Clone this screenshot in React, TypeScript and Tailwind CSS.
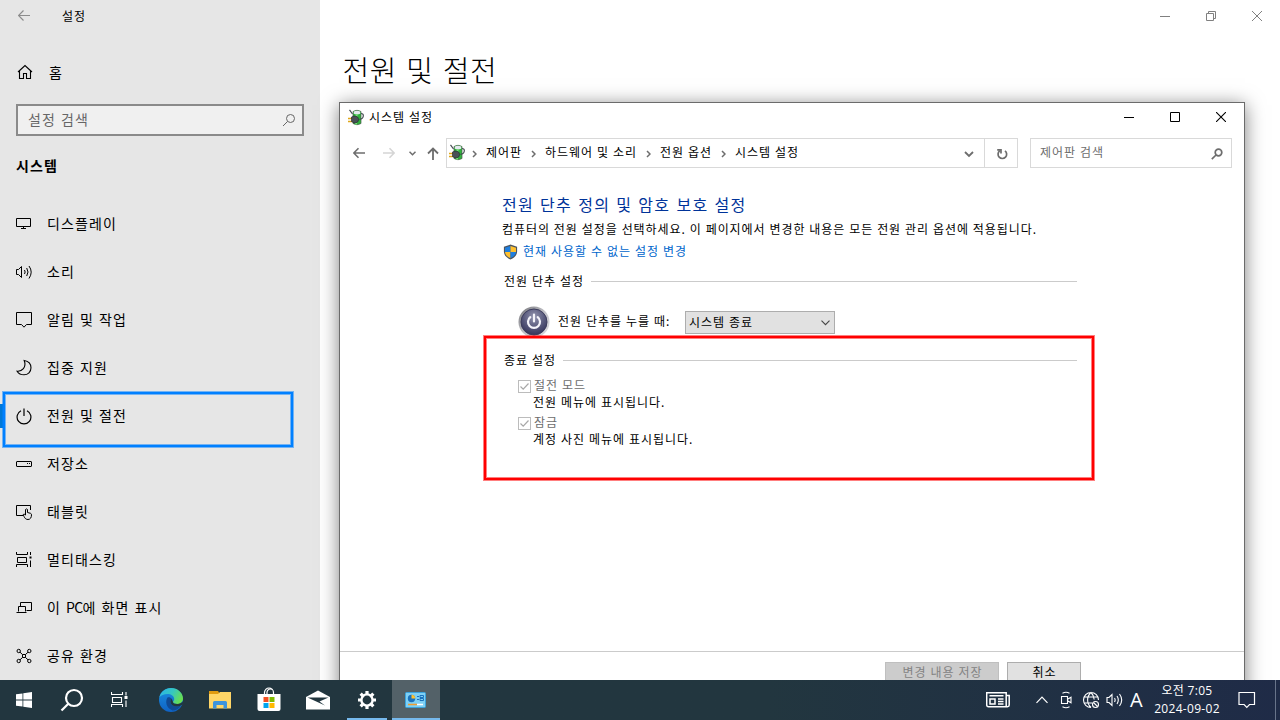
import { ReactNode } from "react"

interface IconProps {
  w?: number
  h?: number
  sw?: number
  className?: string
  children: ReactNode
}

const Icon = ({ w = 18, h = 18, sw = 1, className = "", children }: IconProps) => (
  <svg
    width={w}
    height={h}
    viewBox={`0 0 ${w} ${h}`}
    fill="none"
    stroke="currentColor"
    strokeWidth={sw}
    className={`shrink-0 ${className}`}
  >
    {children}
  </svg>
)

const menuItems: { label: ReactNode; icon: ReactNode }[] = [
  {
    label: "디스플레이",
    icon: <path d="M.5 3.5h14v8H.5zM7.5 11.5v2M5 13.5h5" />,
  },
  {
    label: "소리",
    icon: (
      <>
        <path d="M.5 6.5h2l3-3v11l-3-3h-2z" />
        <path d="M8.5 7q1.3 2 0 4M10.7 5q2.6 4 0 8M13 3q4.4 6 0 12.5" />
      </>
    ),
  },
  {
    label: "알림 및 작업",
    icon: <path d="M.5 1.5h15v12h-5l-2.500 2.700-2.500-2.700h-5z" />,
  },
  {
    label: "집중 지원",
    icon: (
      <path
        d="M8.200 1.500C12.500 2.200 15 5 15 8.800c0 4-3 7-7 7-3 0-5.500-1.300-6.900-3.600 2.500.3 4.700-.7 6.300-2.600 1.800-2.300 2-5 .8-8.100z"
        strokeWidth="1.1"
      />
    ),
  },
  {
    label: "전원 및 절전",
    icon: <path d="M5 3.800A6.900 6.900 0 1 0 11 3.800M8 1.500v7.500" strokeWidth="1.200" />,
  },
  {
    label: "저장소",
    icon: (
      <>
        <rect x=".5" y="6.500" width="15" height="5" rx=".5" />
        <path d="M11 8.500h1M13 8.500h1" />
      </>
    ),
  },
  {
    label: "태블릿",
    icon: (
      <>
        <path d="M7 12.500H.5v-10h14V7" />
        <path d="M9.500 12V6.500q1-1.200 2 0V9.500l3 .8q1 .4 1 1.500c0 2.500-1 4.700-3.500 4.700-2 0-3-1-4-3l-.8-2q.8-1 2.300.5" />
      </>
    ),
  },
  {
    label: "멀티태스킹",
    icon: (
      <>
        <path d="M.5 1v2.500h11V1M1.500 6.500h9v5h-9zM.5 16v-2.500h11V16M14.500 1v3M14.500 9.500V16" />
        <path d="M13.500 6.500h2" strokeWidth="2" />
      </>
    ),
  },
  {
    label: (
      <>
        이 <span className="tracking-[-0.6px]">PC</span>에 화면 표시
      </>
    ),
    icon: <path d="M4.500 7V3.500h11v8h-5M2.500 12.500v-5h7v5M.5 13.500h10" />,
  },
  {
    label: "공유 환경",
    icon: (
      <>
        <circle cx="2.700" cy="4" r="1.700" />
        <circle cx="13.300" cy="4" r="1.700" />
        <circle cx="2.700" cy="14" r="1.700" />
        <circle cx="13.300" cy="14" r="1.700" />
        <path d="M6.500 7.500h3v3h-3zM4 5.200l2.500 2.300M12 5.200L9.500 7.500M4 12.800l2.500-2.300M12 12.800l-2.500-2.300" />
      </>
    ),
  },
]

const Sidebar = () => (
  <aside className="flex w-[320px] shrink-0 flex-col bg-[#e6e6e6]">
    <div className="flex h-8 items-center pl-[18px]">
      <Icon w={12} h={12} sw={1.2} className="text-[#8c8c8c]">
        <path d="M0.500 5.500h12M5.500 .5L0.500 5.500l5 5" />
      </Icon>
      <span className="ml-8 text-xs tracking-[0.96px]">설정</span>
    </div>
    <div className="mt-4 flex h-12 items-center pl-[17px]">
      <Icon w={16} h={16} sw={1.1}>
        <path d="M1 8l7-6.500L15 8M2.500 7v7.500h4v-5h3v5h4V7" />
      </Icon>
      <span className="ml-4 text-sm tracking-[1.1px]">홈</span>
    </div>
    <div className="mx-4 mt-2 flex h-8 items-center justify-between border-2 border-[#8a8a8a] bg-[#f0f0f0] pr-1.5 pl-[10px] text-[#666]">
      <span className="pb-[3px] text-sm tracking-[1.12px] [word-spacing:0.7px]">설정 검색</span>
      <Icon w={14} h={14}>
        <circle cx="8.500" cy="5.500" r="4" />
        <path d="M5.500 8.500L1 13" />
      </Icon>
    </div>
    <h2 className="mt-[17px] h-[47px] pl-4 text-sm leading-6 font-bold tracking-[1.1px]">
      시스템
    </h2>
    <nav>
      {menuItems.map((item, i) => (
        <div key={i} className="flex h-12 items-center pl-4">
          <Icon>{item.icon}</Icon>
          <span className="ml-[13px] pb-0.5 text-sm tracking-[1.12px] [word-spacing:0.7px]">
            {item.label}
          </span>
        </div>
      ))}
    </nav>
  </aside>
)

const SettingsMain = () => (
  <main className="flex-1">
    <div className="flex h-8 justify-end text-[#808080]">
      <div className="flex w-[46px] items-center justify-center">
        <Icon w={10} h={10}>
          <path d="M0 5.500h10" />
        </Icon>
      </div>
      <div className="flex w-[46px] items-center justify-center">
        <Icon w={10} h={10}>
          <path d="M.5 2.500h7v7h-7zM2.500 2.500v-2h7v7h-2" />
        </Icon>
      </div>
      <div className="flex w-[46px] items-center justify-center">
        <Icon w={10} h={10}>
          <path d="M0 0l10 10M10 0L0 10" />
        </Icon>
      </div>
    </div>
    <h1 className="mt-4 pl-[22.500px] text-[29px] leading-[42px] font-light tracking-[0.6px] [word-spacing:2.2px]">
      전원 및 절전
    </h1>
  </main>
)

const PlugIcon = () => (
  <svg width="16" height="17" viewBox="0 0 16 17" className="shrink-0">
    <path d="M5 2.500q4-2.500 8 0v12q-4 2.500-8 0z" fill="#2fb33c" stroke="#4a5a4a" strokeWidth=".7" />
    <path d="M5.800 2.600q3.200-1.700 6.400 0v2.200q-3.200 1.200-6.400 0z" fill="#e4e9ee" />
    <path d="M8.500 5.500v2M8 13.500v2" stroke="#7be07a" strokeWidth="2" />
    <path d="M13 4.500q2.500 0 2.300 2.500-.3 3-4 3.500M4.500 5L1.500 .8" fill="none" stroke="#444b50" strokeWidth="1.200" />
    <path d="M0 9.500h4M0 12.500h4" stroke="#e0a81a" strokeWidth="1.500" />
    <path d="M3.500 8l2.500-1q4.500 0 4.500 3.500T6 14l-2.500-1.500z" fill="#4a5056" stroke="#1f2326" strokeWidth=".6" />
  </svg>
)

const Chevron = () => (
  <div className="flex w-[23px] shrink-0 items-center justify-center text-[#6d6d6d]">
    <Icon w={5} h={8} sw={1.5} className="mt-0.5">
      <path d="M1 1l3 3-3 3" />
    </Icon>
  </div>
)

const crumbs = ["제어판", "하드웨어 및 소리", "전원 옵션", "시스템 설정"]

const AddressBar = () => (
  <div className="mt-[5px] flex h-[30px] items-center">
    <div className="flex w-[106px] shrink-0 items-center pl-[13px] text-[#6d6d6d]">
      <Icon w={12} h={12} sw={1.6}>
        <path d="M.8 6H12M5.500 1.200L.8 6l4.700 4.800" />
      </Icon>
      <Icon w={12} h={12} sw={1.6} className="ml-[18px] text-[#d5d5d5]">
        <path d="M0 6h11.200M6.500 1.200L11.200 6l-4.700 4.800" />
      </Icon>
      <Icon w={7} h={5} sw={1.5} className="ml-[14px]">
        <path d="M.5 .8l3 3 3-3" />
      </Icon>
      <Icon w={12} h={13} sw={1.8} className="ml-[11px]">
        <path d="M6 1.500V13M1 6.500l5-5 5 5" />
      </Icon>
    </div>
    <div className="flex h-[30px] w-[572px] border border-[#d9d9d9]">
      <div className="flex flex-1 items-center pl-[2px] text-xs tracking-[0.96px] [word-spacing:0.35px]">
        <div className="-mr-0.5 pb-px">
          <PlugIcon />
        </div>
        {crumbs.map((crumb) => (
          <div key={crumb} className="flex items-center">
            <Chevron />
            <span className="pb-0.5">{crumb}</span>
          </div>
        ))}
        <Icon w={10} h={7} sw={1.8} className="mt-0.5 mr-[10px] ml-auto text-[#6d6d6d]">
          <path d="M1 1l4 4 4-4" />
        </Icon>
      </div>
      <div className="flex w-[33px] items-center justify-center border-l border-[#d9d9d9] text-[#6d6d6d]">
        <Icon w={12} h={12} sw={1.7} className="mt-px ml-px">
          <path d="M9 2.800A4.300 4.300 0 1 1 3.700 2.800M1.200 1.800h3.800v3.800" />
        </Icon>
      </div>
    </div>
    <div className="ml-3 flex h-[30px] w-[202px] items-center justify-between border border-[#d9d9d9] pr-[8px] pl-[9px]">
      <span className="pb-0.5 text-xs tracking-[0.96px] text-[#6d6d6d] [word-spacing:0.35px]">
        제어판 검색
      </span>
      <Icon w={12} h={12} sw={1.7} className="mt-px">
        <g stroke="#6d6d6d">
          <circle cx="7.500" cy="4.500" r="3.300" />
          <path d="M5 7L.8 11.200" />
        </g>
      </Icon>
    </div>
  </div>
)

const ShieldIcon = () => (
  <svg width="15" height="16" viewBox="0 0 15 16" className="shrink-0">
    <path d="M7.500 .6l6.600 2.200v4.500c0 4-2.800 6.600-6.600 8.200C3.700 13.900.9 11.300.9 7.300V2.800z" fill="#4c5560" />
    <path d="M7.500 1.900v6H2V3.700z" fill="#1f7fe0" />
    <path d="M7.500 1.900L13 3.700v4.200H7.500z" fill="#ffc02e" />
    <path d="M2 7.900h5.500v6.300C4.500 12.800 2.300 10.900 2 7.900z" fill="#ffc02e" />
    <path d="M13 7.900H7.500v6.300c3-1.400 5.200-3.300 5.500-6.300z" fill="#1f7fe0" />
  </svg>
)

const PowerOrb = () => (
  <svg width="32" height="32" viewBox="0 0 32 32" className="shrink-0">
    <defs>
      <linearGradient id="rim" x1="0" y1="0" x2="1" y2="1">
        <stop offset="0" stopColor="#6f7074" />
        <stop offset=".5" stopColor="#c2c2c8" />
        <stop offset="1" stopColor="#dcdce0" />
      </linearGradient>
      <radialGradient id="orb" cx=".5" cy=".3" r=".7">
        <stop offset="0" stopColor="#9496b0" />
        <stop offset=".6" stopColor="#56577a" />
        <stop offset="1" stopColor="#34345a" />
      </radialGradient>
    </defs>
    <circle cx="16" cy="16" r="15.500" fill="url(#rim)" />
    <circle cx="16" cy="16" r="13" fill="url(#orb)" stroke="#3c3c5c" />
    <path d="M12.300 11.200a6 6 0 1 0 7.400 0M16 8.500v7" fill="none" stroke="#f4f4fa" strokeWidth="2.200" strokeLinecap="round" />
  </svg>
)

const Section = ({ title }: { title: string }) => (
  <div className="flex h-5 w-[573px] items-center">
    <span>{title}</span>
    <div className="ml-[7px] h-px flex-1 bg-[#cbcbcb]" />
  </div>
)

const Option = ({ label, note }: { label: string; note: string }) => (
  <div className="h-[37px] pl-[14px]">
    <div className="flex h-[17px] items-center">
      <div className="mt-1 flex size-[13px] items-center justify-center border border-[#bcbcbc]">
        <Icon w={11} h={11} sw={1.2} className="text-[#a8a8a8]">
          <path d="M1.500 5.500l2.700 2.700 5.300-5.700" />
        </Icon>
      </div>
      <span className="ml-[3px] text-[#6d6d6d]">{label}</span>
    </div>
    <p className="pl-[15px] leading-[17px]">{note}</p>
  </div>
)

const ControlPanel = () => (
  <section className="absolute top-[102px] left-[339px] flex h-[640px] w-[906px] flex-col border border-[#6b6b6b] bg-white shadow-[0_3px_18px_rgba(0,0,0,0.5)]">
    <div className="flex h-[30px] shrink-0 items-center pb-0.5 pl-2">
      <PlugIcon />
      <span className="ml-[5px] text-xs tracking-[0.96px] [word-spacing:0.35px]">시스템 설정</span>
      <div className="ml-auto flex">
        <div className="flex w-[46px] items-center justify-center pl-px">
          <Icon w={11} h={10}>
            <path d="M0 5.500h10" />
          </Icon>
        </div>
        <div className="flex w-[46px] items-center justify-center">
          <Icon w={10} h={10}>
            <path d="M.5 .5h9v9h-9z" />
          </Icon>
        </div>
        <div className="flex w-[46px] items-center justify-center">
          <Icon w={10} h={10} sw={1.1}>
            <path d="M0 0l10 10M10 0L0 10" />
          </Icon>
        </div>
      </div>
    </div>
    <AddressBar />
    <div className="mt-6 h-[459px] pl-[162px] text-xs leading-5 tracking-[0.96px] [word-spacing:0.35px]">
      <h3 className="text-base leading-6 tracking-[1.320px] text-[#003399] [word-spacing:1.1px]">
        전원 단추 정의 및 암호 보호 설정
      </h3>
      <p className="mt-[3px] tracking-[0.93px]">
        컴퓨터의 전원 설정을 선택하세요. 이 페이지에서 변경한 내용은 모든 전원 관리 옵션에
        적용됩니다.
      </p>
      <div className="mt-[2px] flex items-center text-[#0066cc]">
        <div className="pt-px pl-px">
          <ShieldIcon />
        </div>
        <span className="ml-[5px]">현재 사용할 수 없는 설정 변경</span>
      </div>
      <div className="mt-[10px] pl-[2px]">
        <Section title="전원 단추 설정" />
        <div className="mt-[14px] flex h-8 items-center pl-[13px]">
          <div className="pt-px pl-px">
            <PowerOrb />
          </div>
          <span className="ml-2 w-[127px]">전원 단추를 누를 때:</span>
          <div className="mt-[3px] flex h-[23px] w-[150px] items-center justify-between border border-[#adadad] bg-[#e1e1e1] pr-1 pl-[3px]">
            <span className="pb-0.5">시스템 종료</span>
            <Icon w={9} h={6} sw={1.1} className="text-[#444]">
              <path d="M.5 .7l4 4 4-4" />
            </Icon>
          </div>
        </div>
        <div className="mt-[13px]">
          <Section title="종료 설정" />
        </div>
        <div className="mt-[6px]">
          <Option label="절전 모드" note="전원 메뉴에 표시됩니다." />
          <Option label="잠금" note="계정 사진 메뉴에 표시됩니다." />
        </div>
      </div>
    </div>
    <footer className="flex flex-1 items-start justify-end gap-2 border-t border-[#cbcbcb] pt-[10px] pr-[163px] text-xs leading-[18px] tracking-[0.96px] [word-spacing:0.35px]">
      <div className="h-[23px] w-[114px] border border-[#bfbfbf] bg-[#cccccc] pl-px text-center text-[#838383]">
        변경 내용 저장
      </div>
      <div className="h-[23px] w-[74px] border border-[#adadad] bg-[#e1e1e1] pl-px text-center">취소</div>
    </footer>
  </section>
)

const EdgeIcon = () => (
  <svg width="24" height="24" viewBox="0 0 24 24">
    <defs>
      <linearGradient id="edgeTop" x1="0" y1=".2" x2="1" y2=".6">
        <stop offset="0" stopColor="#2bb5e8" />
        <stop offset=".5" stopColor="#36c7c0" />
        <stop offset="1" stopColor="#6be04a" />
      </linearGradient>
      <linearGradient id="edgeBody" x1="0" y1="0" x2="0" y2="1">
        <stop offset="0" stopColor="#1a8fe0" />
        <stop offset="1" stopColor="#0f62c4" />
      </linearGradient>
    </defs>
    <circle cx="12" cy="12" r="12" fill="url(#edgeBody)" />
    <path d="M.3 9.500C1.500 4 6.300 0 12 0c6.700 0 12 5 12 10.500 0 3.500-2.700 5.500-5.700 5.500-2.800 0-4.300-1-4.300-2 0-.7 1.200-1 1.200-3C15.200 8 12 6 8.500 6 5 6 1.800 7.500.3 9.500z" fill="url(#edgeTop)" />
    <path d="M8.500 9.500C6 13 7 20 13.500 22.500c3.500 0 6.500-1.800 8.500-5-4 2-9.500 1-10.500-3-.4-1.600.2-3 1.300-3.700-1-1.500-3-2-4.300-1.300z" fill="#104a94" />
    <path d="M14 14c0 1 1.500 2 4.300 2 2 0 4.400-1 5.400-2.800L24 16l-2 1.500c-4 2-9.500 1-10.500-3-.4-1.600.2-3 1.300-3.700z" fill="#22363f" />
  </svg>
)

const ExplorerIcon = () => (
  <svg width="22" height="20" viewBox="0 0 22 20">
    <path d="M0 1h9l1.500 2.500V6H0z" fill="#e09b10" />
    <path d="M0 4h9l2-2h11v16.500H0z" fill="#ffd667" />
    <path d="M4 18.500V12.500q0-1.500 1.500-1.500h11q1.500 0 1.500 1.500v6h-3.500V15h-7v3.500z" fill="#3d94dc" />
  </svg>
)

const StoreIcon = () => (
  <svg width="24" height="25" viewBox="0 0 24 25">
    <path d="M7.500 8V5.500a4.500 4.500 0 0 1 9 0V8M10 8V5a3.500 3.500 0 0 1 5.500-2.500" fill="none" stroke="#fff" strokeWidth="1.200" />
    <path d="M.5 7h23v15q0 2-2 2h-19q-2 0-2-2z" fill="#fff" />
    <path d="M6.500 10h5v5h-5z" fill="#f25022" />
    <path d="M12.500 10h5v5h-5z" fill="#7fba00" />
    <path d="M6.500 16h5v5h-5z" fill="#00a4ef" />
    <path d="M12.500 16h5v5h-5z" fill="#ffb900" />
  </svg>
)

const MailIcon = () => (
  <svg width="24" height="20" viewBox="0 0 24 20">
    <path d="M0 7l12-6.500L24 7v12.500H0z" fill="#fff" />
    <path d="M1.500 7.500h21l-9 4L19 15.500z" fill="#22363f" />
  </svg>
)

const gearAngles = [0, 45, 90, 135]

const GearIcon = () => (
  <Icon w={20} h={20} sw={3.2} className="text-white">
    {gearAngles.map((a) => (
      <path
        key={a}
        d="M10 1v3.500M10 15.500V19"
        transform={`rotate(${a} 10 10)`}
      />
    ))}
    <circle cx="10" cy="10" r="5.600" strokeWidth="2.400" />
  </Icon>
)

const PanelIcon = () => (
  <svg width="21" height="16" viewBox="0 0 21 16">
    <rect x=".5" y=".5" width="20" height="15" rx="1" fill="#7fd0f5" stroke="#3ba3dd" />
    <circle cx="6.500" cy="6.500" r="3.700" fill="#1b72bd" />
    <path d="M6.500 6.500V2.800a3.700 3.700 0 0 1 3.700 3.700z" fill="#ffc02e" />
    <path d="M12 4.500h2M12 7.500h2M15 3.500h3.500v2H15zM15 6.500h3.500v2H15z" fill="none" stroke="#1b72bd" />
    <path d="M3 12.500h9" stroke="#f39c2c" strokeWidth="1.500" />
    <path d="M12 12.500h6" stroke="#fff" strokeWidth="1.500" />
  </svg>
)

const Taskbar = () => (
  <footer className="flex h-10 shrink-0 bg-linear-to-r from-[#22363f] from-60% to-[#1f2b47] text-white">
    <div className="flex w-12 items-center justify-center">
      <svg width="16" height="16" viewBox="0 0 16 16" fill="#fff">
        <path d="M0 2.300L6.500 1.400v6.200H0zM7.300 1.300L16 0v7.600H7.300zM0 8.400h6.500v6.200L0 13.700zM7.300 8.400H16V16l-8.700-1.300z" />
      </svg>
    </div>
    <div className="flex w-12 items-center justify-center">
      <Icon w={24} h={24} sw={2.2}>
        <circle cx="14" cy="10" r="8" />
        <path d="M8.300 15.700L1.500 22.500" />
      </Icon>
    </div>
    <div className="mr-[3px] flex w-12 items-center justify-center pr-px">
      <Icon w={17} h={18} sw={1.1}>
        <path d="M.5 1v2.500h11V1M1.500 6.500h9v5h-9zM.5 16v-2.500h11V16M15 1v3.500M15 9.500V16" />
        <path d="M13.500 6.500h3" strokeWidth="3" />
      </Icon>
    </div>
    <div className="mr-px flex w-12 items-center justify-center">
      <EdgeIcon />
    </div>
    <div className="mr-px flex w-12 items-center justify-center">
      <ExplorerIcon />
    </div>
    <div className="mr-px flex w-12 items-center justify-center pr-px pb-px">
      <StoreIcon />
    </div>
    <div className="mr-px flex w-12 items-center justify-center">
      <MailIcon />
    </div>
    <div className="mr-px flex w-12 flex-col items-center">
      <div className="flex h-[38px] items-center pt-0.5">
        <GearIcon />
      </div>
      <div className="h-0.5 w-10 bg-[#76b9ed]" />
    </div>
    <div className="flex w-12 items-center justify-center border-b-2 border-[#76b9ed] bg-[#536168] pt-px pr-px">
      <PanelIcon />
    </div>

    <div className="ml-auto flex items-center">
      <Icon w={24} h={18} sw={1.5}>
        <path d="M.7 1.700h19.500v14H2.500q-1.800 0-1.800-1.800zM20.200 4.500h3v9.500q0 1.700-1.700 1.700H19" />
        <path d="M3.500 4.700h14M12 8h5.500M12 10.500h5.500M12 13h5.500M4 8h5v5H4z" />
      </Icon>
      <Icon w={12} h={8} sw={1.2} className="ml-[26px]">
        <path d="M.5 6.800L6 1.200l5.500 5.600" />
      </Icon>
      <Icon w={12} h={18} sw={1.1} className="ml-3">
        <path d="M2.500 2.200Q6 .3 9.500 2.200M2.500 15.800q3.500 1.900 7 0M1.500 5.500h6v7h-6zM7.500 8.200l3.500-2v5.600l-3.500-2" />
      </Icon>
      <Icon w={18} h={18} sw={1.1} className="ml-[10px]">
        <path d="M9 16.500A7.500 7.500 0 1 1 16.500 9M9 16.500c-4.500-4-4.500-11 0-15 2 2 3 4.500 3.200 7M2 6h14M2 12h8" />
        <circle cx="13.500" cy="13.500" r="3" />
        <path d="M11.500 11.500l4 4" />
      </Icon>
      <Icon w={18} h={18} sw={1.1} className="ml-1.5">
        <path d="M1 6.500h2l3-3v11l-3-3H1z" />
        <path d="M8.500 7q1.300 2 0 4M11 5q2.600 4 0 8M13.500 3q4.400 6 0 12" />
      </Icon>
      <span className="ml-1.5 w-[14px] font-['Open_Sans',sans-serif] text-[20px] leading-none">A</span>
      <div className="ml-2 w-[70px] text-center font-['Open_Sans','Noto_Sans_CJK_KR',sans-serif] text-xs leading-[18px] tracking-[0.3px]">
        <p>오전 7:05</p>
        <p>2024-09-02</p>
      </div>
      <Icon w={18} h={18} sw={1.2} className="ml-4">
        <path d="M1 1.500h15.500v12h-5l-2.700 2.800-2.700-2.800H1z" />
      </Icon>
      <div className="ml-[19px] h-10 w-[5px] border-l border-[#68748a]" />
    </div>
  </footer>
)

const App = () => (
  <div className="relative flex h-[720px] w-[1280px] flex-col overflow-hidden bg-white font-['Noto_Sans_CJK_KR','Noto_Sans',sans-serif] whitespace-nowrap text-black">
    <div className="relative flex h-[680px] overflow-hidden">
      <Sidebar />
      <SettingsMain />
      <ControlPanel />
      <div className="absolute top-[404px] left-0 h-6 w-[3px] bg-[#0078d7]" />
      <div className="absolute top-[392px] left-[3px] h-[55px] w-[290px] border-2 border-[#0080ff] shadow-[0_0_0_1px_rgba(0,128,255,0.5),inset_0_0_0_1px_rgba(0,128,255,0.5)]" />
      <div className="absolute top-[336px] left-[484px] h-[144px] w-[610px] border-2 border-[#ff0000] shadow-[0_0_0_1px_rgba(255,0,0,0.5),inset_0_0_0_1px_rgba(255,0,0,0.5)]" />
    </div>
    <Taskbar />
  </div>
)

export default App
